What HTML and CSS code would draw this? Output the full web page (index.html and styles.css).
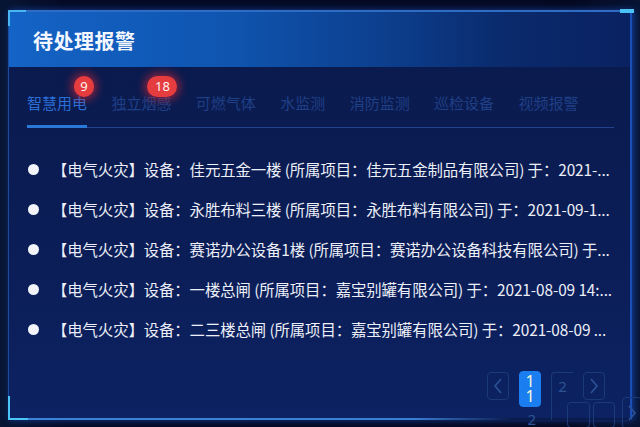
FILE: index.html
```html
<!DOCTYPE html>
<html lang="zh-CN">
<head>
<meta charset="utf-8">
<title>待处理报警</title>
<link rel="stylesheet" href="styles.css">
</head>
<body>
<div class="panel">
  <span class="corner tl"></span>
  <span class="corner tr"></span>
  <span class="corner bl"></span>
  <div class="header"><h1 class="title">待处理报警</h1></div>
  <div class="tabs">
    <div class="tab active">智慧用电<span class="badge">9</span></div>
    <div class="tab">独立烟感<span class="badge wide">18</span></div>
    <div class="tab">可燃气体</div>
    <div class="tab">水监测</div>
    <div class="tab">消防监测</div>
    <div class="tab">巡检设备</div>
    <div class="tab">视频报警</div>
  </div>
  <ul class="list">
    <li class="item"><span class="dot"></span><span class="text">【电气火灾】设备：佳元五金一楼 (所属项目：佳元五金制品有限公司) 于：2021-...</span></li>
    <li class="item"><span class="dot"></span><span class="text">【电气火灾】设备：永胜布料三楼 (所属项目：永胜布料有限公司) 于：2021-09-1...</span></li>
    <li class="item"><span class="dot"></span><span class="text">【电气火灾】设备：赛诺办公设备1楼 (所属项目：赛诺办公设备科技有限公司) 于...</span></li>
    <li class="item"><span class="dot"></span><span class="text">【电气火灾】设备：一楼总闸 (所属项目：嘉宝别罐有限公司) 于：2021-08-09 14:...</span></li>
    <li class="item"><span class="dot"></span><span class="text">【电气火灾】设备：二三楼总闸 (所属项目：嘉宝别罐有限公司) 于：2021-08-09 ...</span></li>
  </ul>
  <div class="pager">
    <div class="pg btn"><svg width="10" height="16" viewBox="0 0 10 16"><path d="M8 1 L2 8 L8 15" fill="none" stroke="#2d5396" stroke-width="1.6"/></svg></div>
    <div class="pg num active"><span>1</span><span>1</span></div>
    <div class="pg num tall">2</div>
    <div class="pg btn"><svg width="10" height="16" viewBox="0 0 10 16"><path d="M2 1 L8 8 L2 15" fill="none" stroke="#2d5396" stroke-width="1.6"/></svg></div>
    <span class="ghost g2">2</span>
    <span class="ghost gb1"></span>
    <span class="ghost gb2"></span>
    <span class="ghost gb3"><svg width="10" height="16" viewBox="0 0 10 16"><path d="M2 1 L8 8 L2 15" fill="none" stroke="#2d5396" stroke-width="1.6"/></svg></span>
  </div>
</div>
</body>
</html>
```

FILE: styles.css
```css
* { box-sizing: border-box; }
html, body { margin: 0; padding: 0; }
body {
  width: 640px;
  height: 427px;
  overflow: hidden;
  background: linear-gradient(90deg, #081634 0%, #050b26 10%, #050a22 90%, #071433 100%);
  font-family: "Noto Sans CJK SC", "Noto Sans", sans-serif;
  padding: 10px 8px 7px 8px;
}
.panel {
  position: relative;
  height: 410px;
  border-top: 2px solid #2f6cc4;
  border-left: 1px solid #1c4c9e;
  border-right: 2px solid #1a4fb8;
  border-bottom: 2px solid transparent;
  background: linear-gradient(180deg, #0a1a4c 0%, #0b1d56 55%, #0c2262 100%);
  display: flex;
  flex-direction: column;
  box-shadow: 2px 0 7px rgba(30, 90, 220, 0.6);
}
.panel::after {
  content: "";
  position: absolute;
  left: -1px;
  bottom: -2px;
  width: 505px;
  height: 2px;
  background: linear-gradient(90deg, #3d84d8 0%, #3a7fd4 80%, rgba(58,127,212,0) 100%);
}
.corner { position: absolute; z-index: 3; }
.corner.tl {
  left: -1px; top: -2px; width: 18px; height: 16px;
  border-top: 2px solid #49b6f2; border-left: 2px solid #49b6f2;
}
.corner.tr {
  right: -4px; top: -3px; width: 14px; height: 4px;
  background: #49c2f6;
}
.corner.bl {
  left: -1px; bottom: -2px; width: 20px; height: 24px;
  border-bottom: 2px solid #4bc4f6; border-left: 2px solid #4bc4f6;
}
.header {
  height: 55px;
  background: linear-gradient(90deg, #1463c6 0%, #0f55b0 35%, #0c3f8e 60%, #0a2a6c 80%, #0a2262 100%);
  display: flex;
  align-items: center;
  padding-left: 24px;
}
.title {
  margin: 0;
  color: #f4f7ff;
  font-size: 20px;
  font-weight: 700;
  letter-spacing: 0.5px;
  line-height: 1;
  padding-top: 2px;
}
.tabs {
  display: flex;
  gap: 24.4px;
  margin: 28px 16px 0 18px;
  border-bottom: 1px solid #23448c;
}
.tab {
  position: relative;
  color: #1f3f86;
  font-size: 15px;
  line-height: 16px;
  padding-bottom: 16px;
  white-space: nowrap;
}
.tab.active {
  color: #2a6fd6;
  border-bottom: 3px solid #2a78d8;
  margin-bottom: -1px;
  padding-bottom: 14px;
}
.badge {
  position: absolute;
  top: -19px;
  right: -7px;
  min-width: 20px;
  height: 21px;
  padding: 0 5px;
  border-radius: 11px;
  background: #e53c3f;
  color: #fff4f0;
  font-size: 13px;
  line-height: 21px;
  text-align: center;
  box-shadow: 0 0 8px 3px rgba(230, 40, 50, 0.55);
  font-family: "Noto Sans", "Noto Sans CJK SC", sans-serif;
}
.badge.wide { min-width: 30px; right: -6px; }
.list {
  list-style: none;
  margin: 0;
  padding: 21px 16px 0 18px;
}
.item {
  display: flex;
  align-items: center;
  height: 40px;
}
.dot {
  flex: none;
  width: 11px;
  height: 11px;
  border-radius: 50%;
  background: #f2f4fa;
  margin-left: 1px;
  margin-right: 13px;
}
.text {
  color: #eceff8;
  font-size: 15.4px;
  white-space: nowrap;
  overflow: hidden;
  letter-spacing: -0.1px;
}
.pager {
  position: relative;
  margin-top: auto;
  display: flex;
  align-items: flex-start;
  justify-content: flex-end;
  gap: 10px;
  padding-right: 25px;
  height: 46px;
}
.pg {
  width: 22px;
  height: 28px;
  border: 1px solid #1c3a78;
  border-radius: 4px;
  display: flex;
  align-items: center;
  justify-content: center;
  color: #2d5396;
  font-size: 15px;
  font-family: "Noto Sans", sans-serif;
}
.pg.active {
  background: #1a7ef0;
  border-color: #1a7ef0;
  height: 36px;
  flex-direction: column;
  color: #f8f6d8;
  line-height: 15px;
  font-size: 16px;
  margin-top: -1px;
}
.pg.tall {
  height: 48px;
  align-items: flex-start;
  padding-top: 3px;
  border-right: none;
  border-bottom: none;
  border-radius: 4px 0 0 0;
}
.ghost { position: absolute; }
.g2 { right: 94px; top: 40px; color: #2d5396; font-size: 15px; font-family: "Noto Sans", sans-serif; line-height: 1; }
.gb1, .gb2, .gb3 {
  top: 30px;
  width: 23px;
  height: 26px;
  border: 1px solid #1c3a78;
  border-radius: 4px;
}
.gb1 { right: 40px; }
.gb2 { right: 15px; width: 22px; }
.gb3 { right: -12px; top: 25px; width: 20px; height: 32px; display: flex; align-items: center; justify-content: center; }
```
